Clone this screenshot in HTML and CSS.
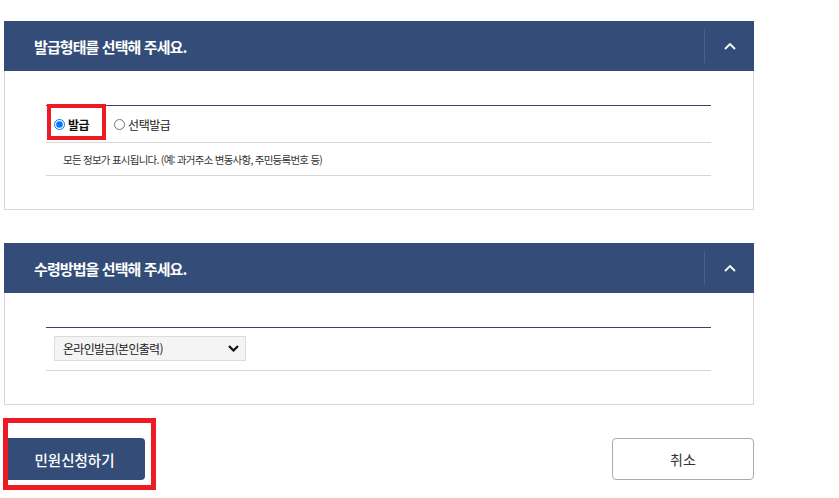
FILE: index.html
```html
<!DOCTYPE html>
<html lang="ko">

<head>
    <meta charset="UTF-8">
    <meta name="viewport" content="width=device-width, initial-scale=1.0">
    <title>민원신청 - 발급형태 선택</title>
    <link rel="stylesheet" href="styles.css">
</head>

<body>
    <div class="page">
        <section class="panel">
            <div class="panel-head">
                <h2 class="panel-title">발급형태를 선택해 주세요.</h2>
                <button type="button" class="toggle" aria-label="접기">
                    <svg width="12" height="8" viewBox="0 0 12 8"><path d="M1 7 L6 2 L11 7" fill="none" stroke="#fff" stroke-width="1.8"/></svg>
                </button>
            </div>
            <div class="panel-body">
                <div class="option-list">
                    <div class="option-row radio-row">
                        <label class="radio">
                            <input type="radio" name="issueType" checked>
                            <span class="radio-label strong">발급</span>
                        </label>
                        <label class="radio">
                            <input type="radio" name="issueType">
                            <span class="radio-label">선택발급</span>
                        </label>
                        <span class="mark mark-radio"></span>
                    </div>
                    <div class="option-row desc-row">
                        모든 정보가 표시됩니다. (예: 과거주소 변동사항, 주민등록번호 등)
                    </div>
                </div>
            </div>
        </section>

        <section class="panel">
            <div class="panel-head">
                <h2 class="panel-title">수령방법을 선택해 주세요.</h2>
                <button type="button" class="toggle" aria-label="접기">
                    <svg width="12" height="8" viewBox="0 0 12 8"><path d="M1 7 L6 2 L11 7" fill="none" stroke="#fff" stroke-width="1.8"/></svg>
                </button>
            </div>
            <div class="panel-body">
                <div class="option-list">
                    <div class="option-row select-row">
                        <div class="select-wrap">
                            <select class="select">
                                <option>온라인발급(본인출력)</option>
                            </select>
                            <svg class="select-arrow" width="11" height="7" viewBox="0 0 11 7"><path d="M1 1 L5.5 5.5 L10 1" fill="none" stroke="#111" stroke-width="2.2"/></svg>
                        </div>
                    </div>
                </div>
            </div>
        </section>

        <div class="actions">
            <div class="submit-wrap">
                <button type="button" class="btn btn-primary">민원신청하기</button>
                <span class="mark mark-submit"></span>
            </div>
            <button type="button" class="btn btn-cancel">취소</button>
        </div>
    </div>
</body>

</html>
```

FILE: styles.css
```css
body, html {
    margin: 0;
    padding: 0;
    font-family: "Noto Sans CJK KR", "Noto Sans", sans-serif;
    background-color: #fff;
    color: #333;
}

.page {
    width: 750px;
    padding: 21px 0 18px 4px;
}

.panel + .panel {
    margin-top: 33px;
}

.panel-head {
    background-color: #344d78;
    height: 50px;
    display: flex;
    align-items: center;
    justify-content: space-between;
    padding-left: 30px;
}

.panel-title {
    margin: 0;
    color: #fff;
    font-size: 15px;
    font-weight: bold;
    letter-spacing: -0.9px;
}

.toggle {
    width: 50px;
    height: 34px;
    border: none;
    border-left: 1px solid #4b6189;
    background: transparent;
    display: flex;
    align-items: center;
    justify-content: center;
    padding: 0;
    cursor: pointer;
}

.panel-body {
    border: 1px solid #d7d7d7;
    border-top: none;
    padding: 34px 42px 33px 41px;
}

.option-list {
    border-top: 1px solid #34456e;
}

.option-row {
    border-bottom: 1px solid #d5d5d5;
}

.radio-row {
    position: relative;
    height: 36px;
    display: flex;
    align-items: center;
    padding-left: 8px;
    gap: 25px;
}

.radio {
    display: flex;
    align-items: center;
    font-size: 12px;
    letter-spacing: -0.5px;
    color: #222;
}

.radio input {
    width: 11px;
    height: 11px;
    margin: 0 3px 0 0;
}

.radio-label.strong {
    font-weight: bold;
    color: #111;
}

.desc-row {
    height: 32px;
    display: flex;
    align-items: center;
    padding-left: 17px;
    font-size: 10.5px;
    letter-spacing: -0.75px;
    color: #333;
}

.select-row {
    padding: 8px 0 9px 8px;
}

.select-wrap {
    position: relative;
    display: flex;
    width: 192px;
}

.select {
    appearance: none;
    width: 192px;
    height: 25px;
    border: 1px solid #dcdcdc;
    background-color: #f4f4f4;
    padding: 0 8px;
    font-family: "Noto Sans CJK KR", sans-serif;
    font-size: 12px;
    letter-spacing: -0.7px;
    color: #222;
    border-radius: 0;
}

.select-arrow {
    position: absolute;
    right: 7px;
    top: 9px;
    pointer-events: none;
}

.actions {
    margin-top: 33px;
    display: flex;
    justify-content: space-between;
}

.submit-wrap {
    position: relative;
    display: flex;
}

.btn {
    height: 42px;
    font-family: "Noto Sans CJK KR", sans-serif;
    font-size: 14px;
    border-radius: 4px;
    cursor: pointer;
}

.btn-primary {
    width: 141px;
    background-color: #344d78;
    color: #fff;
    border: none;
    font-size: 14.5px;
    font-weight: 500;
}

.btn-cancel {
    width: 142px;
    background-color: #fff;
    color: #333;
    border: 1px solid #aaa;
}

/* red annotation boxes */
.mark {
    position: absolute;
    box-sizing: border-box;
    border: 4px solid #ed1c24;
    pointer-events: none;
}

.mark-radio {
    left: 1px;
    top: -2px;
    width: 59px;
    height: 36px;
}

.mark-submit {
    border-width: 5px;
    left: -1px;
    top: -20px;
    width: 153px;
    height: 72px;
}
```
